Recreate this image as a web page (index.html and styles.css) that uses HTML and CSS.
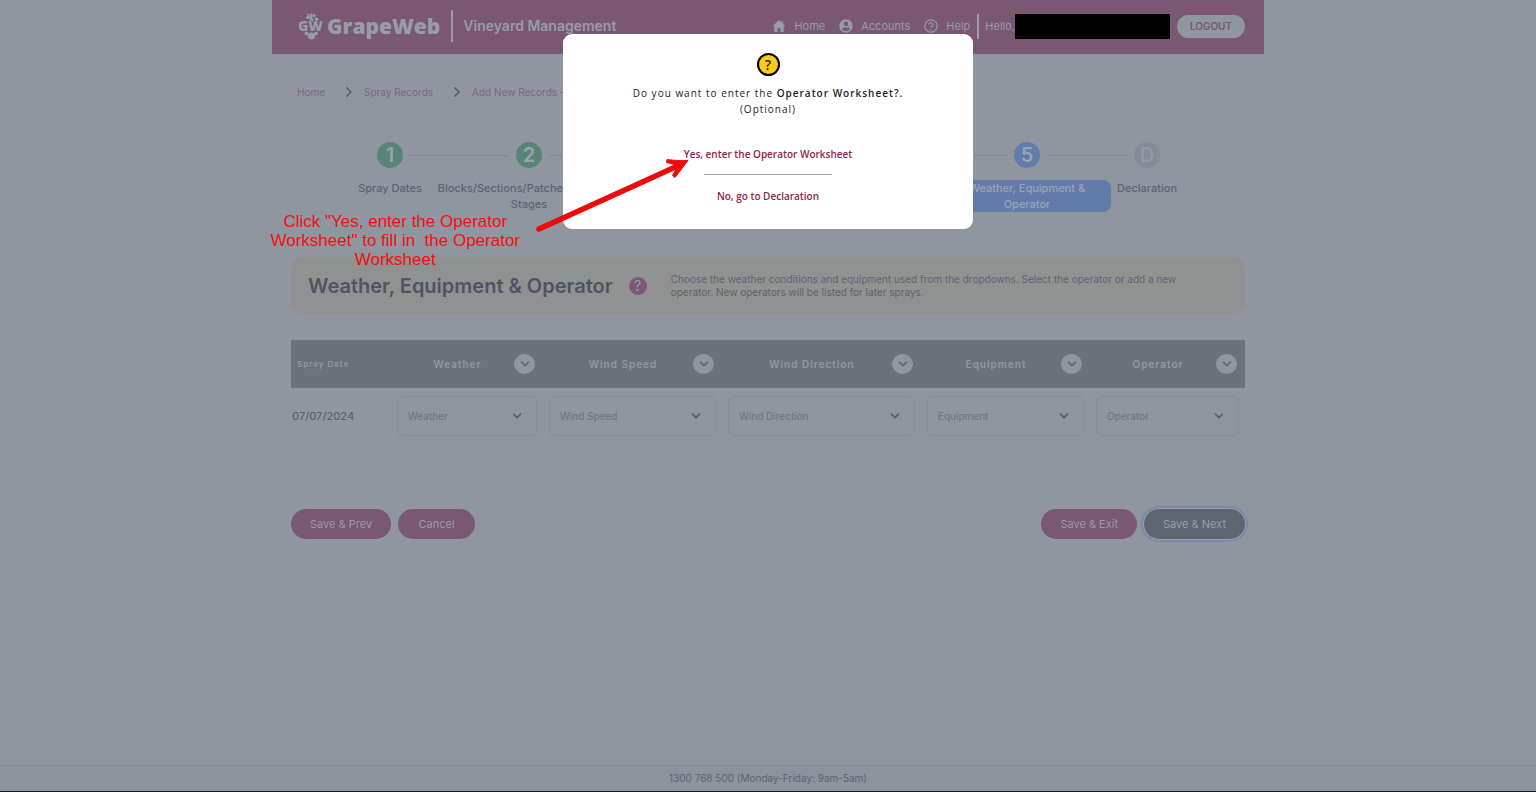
FILE: index.html
```html
<!DOCTYPE html>
<html lang="en">
<head>
    <meta charset="UTF-8">
    <meta name="viewport" content="width=device-width, initial-scale=1.0">
    <title>GrapeWeb - Vineyard Management</title>
    <link rel="stylesheet" href="styles.css">
</head>
<body>
    <!-- Shared icons -->
    <svg class="icon-defs" aria-hidden="true">
        <symbol id="chevron-down" viewBox="0 0 10 10">
            <path d="M1.5 3.2 5 6.7 8.5 3.2" fill="none" stroke="currentColor" stroke-width="1.8" stroke-linecap="round" stroke-linejoin="round"/>
        </symbol>
        <symbol id="chevron-right" viewBox="0 0 10 10">
            <path d="M3 1 7 5 3 9" fill="none" stroke="currentColor" stroke-width="1.7" stroke-linecap="round" stroke-linejoin="round"/>
        </symbol>
    </svg>

    <div class="page">
        <header class="header">
            <div class="brand">
                <svg class="brand-mark" viewBox="0 0 26 28" aria-hidden="true">
                    <path d="M12.5 7 10.5 3 9 2.200M12.500 7C14 5 13.500 3 12.500 1.500" fill="none" stroke="currentColor" stroke-width="1.500"/>
                    <circle cx="9.500" cy="5.500" r="1.600"/>
                    <circle cx="16" cy="3.800" r="1.700"/>
                    <circle cx="18.500" cy="7.500" r="1.900"/>
                    <circle cx="13.500" cy="8" r="2"/>
                    <circle cx="8.500" cy="21.500" r="2"/>
                    <circle cx="18" cy="21.500" r="1.900"/>
                    <circle cx="13.500" cy="24" r="3.500"/>
                    <text x="0" y="19" class="brand-mark-text">GW</text>
                </svg>
                <span class="brand-name">GrapeWeb</span>
                <span class="brand-title">Vineyard Management</span>
            </div>
            <nav class="nav">
                <a href="#home">
                    <svg viewBox="0 0 14 14" aria-hidden="true"><path d="M7 1 .5 7.200H2.300V13H5.500V9.200H8.500V13H11.700V7.200H13.500L11.300 5.100V2.200H9.600V3.500Z" fill="currentColor"/></svg>
                    Home
                </a>
                <a href="#accounts">
                    <svg viewBox="0 0 14 14" aria-hidden="true"><path fill-rule="evenodd" d="M7 .3a6.700 6.700 0 1 0 0 13.400A6.700 6.700 0 0 0 7 .3ZM7 2.600a2.300 2.300 0 1 1 0 4.600 2.300 2.300 0 0 1 0-4.600ZM2.900 9.900C3.500 8.800 5.200 8.400 7 8.400s3.500.4 4.100 1.500C10.200 11.300 8.700 12.100 7 12.100S3.800 11.300 2.900 9.900Z" fill="currentColor"/></svg>
                    Accounts
                </a>
                <a href="#help">
                    <svg viewBox="0 0 14 14" aria-hidden="true"><g fill="none" stroke="currentColor" stroke-width="1.200"><circle cx="7" cy="7" r="6.200"/><path d="M5 5.600C5 3.100 9 3.100 9 5.500 9 7 7 7 7 8.800M7 9.900V11"/></g></svg>
                    Help
                </a>
                <span class="user">Hello,<span class="user-name"></span></span>
                <button type="button" class="logout">LOGOUT</button>
            </nav>
        </header>

        <main class="content">
            <nav class="breadcrumb">
                <a href="#home">Home</a>
                <svg><use href="#chevron-right"/></svg>
                <a href="#records">Spray Records</a>
                <svg><use href="#chevron-right"/></svg>
                <a href="#new">Add New Records -</a>
            </nav>

            <ol class="steps">
                <li class="step done">
                    <div class="step-track"><span class="step-number">1</span></div>
                    <span class="step-label">Spray Dates</span>
                </li>
                <li class="step done">
                    <div class="step-track"><span class="step-number">2</span></div>
                    <span class="step-label">Blocks/Sections/Patches &amp; Growth Stages</span>
                </li>
                <li class="step done">
                    <div class="step-track"><span class="step-number"></span></div>
                </li>
                <li class="step done">
                    <div class="step-track"><span class="step-number"></span></div>
                </li>
                <li class="step current">
                    <div class="step-track"><span class="step-number">5</span></div>
                    <span class="step-label">Weather, Equipment &amp; Operator</span>
                </li>
                <li class="step">
                    <div class="step-track"><span class="step-number">D</span></div>
                    <span class="step-label">Declaration</span>
                </li>
            </ol>

            <section class="banner">
                <h1>Weather, Equipment &amp; Operator</h1>
                <button type="button" class="help-button" aria-label="Help">?</button>
                <p>Choose the weather conditions and equipment used from the dropdowns. Select the operator or add a new operator. New operators will be listed for later sprays.</p>
            </section>

            <table class="records">
                <colgroup>
                    <col class="col-date">
                    <col class="col-weather">
                    <col class="col-speed">
                    <col class="col-direction">
                    <col class="col-equipment">
                    <col class="col-operator">
                </colgroup>
                <thead>
                    <tr>
                        <th class="date-head">Spray Date</th>
                        <th><div class="head-cell"><span>Weather</span><button type="button" aria-label="Set all weather"><svg><use href="#chevron-down"/></svg></button></div></th>
                        <th><div class="head-cell"><span>Wind Speed</span><button type="button" aria-label="Set all wind speeds"><svg><use href="#chevron-down"/></svg></button></div></th>
                        <th><div class="head-cell"><span>Wind Direction</span><button type="button" aria-label="Set all wind directions"><svg><use href="#chevron-down"/></svg></button></div></th>
                        <th><div class="head-cell"><span>Equipment</span><button type="button" aria-label="Set all equipment"><svg><use href="#chevron-down"/></svg></button></div></th>
                        <th><div class="head-cell"><span>Operator</span><button type="button" aria-label="Set all operators"><svg><use href="#chevron-down"/></svg></button></div></th>
                    </tr>
                </thead>
                <tbody>
                    <tr>
                        <td class="date">07/07/2024</td>
                        <td><div class="select-box"><select aria-label="Weather"><option>Weather</option></select><svg><use href="#chevron-down"/></svg></div></td>
                        <td><div class="select-box"><select aria-label="Wind Speed"><option>Wind Speed</option></select><svg><use href="#chevron-down"/></svg></div></td>
                        <td><div class="select-box"><select aria-label="Wind Direction"><option>Wind Direction</option></select><svg><use href="#chevron-down"/></svg></div></td>
                        <td><div class="select-box"><select aria-label="Equipment"><option>Equipment</option></select><svg><use href="#chevron-down"/></svg></div></td>
                        <td><div class="select-box"><select aria-label="Operator"><option>Operator</option></select><svg><use href="#chevron-down"/></svg></div></td>
                    </tr>
                </tbody>
            </table>

            <div class="actions">
                <button type="button" class="btn">Save &amp; Prev</button>
                <button type="button" class="btn">Cancel</button>
                <button type="button" class="btn btn-right">Save &amp; Exit</button>
                <button type="button" class="btn btn-next">Save &amp; Next</button>
            </div>
        </main>

        <!-- Callout pointing at the first choice -->
        <p class="callout">Click "Yes, enter the Operator Worksheet" to fill in &nbsp;the Operator Worksheet</p>
        <svg class="callout-arrow" viewBox="0 0 156 80" aria-hidden="true">
            <path d="M3 74 146 9" fill="none" stroke="#ee0a0a" stroke-width="5.500" stroke-linecap="round"/>
            <path d="M152 5.500C144 6 136 5 131 4.500L130.500 7.500 142 10.500 136.500 20.500 139 22.500Z" fill="#ee0a0a" stroke="#ee0a0a" stroke-width="1" stroke-linejoin="round"/>
        </svg>
    </div>

    <footer class="footer">1300 768 500 (Monday-Friday: 9am-5am)</footer>

    <div class="overlay">
        <div class="modal" role="dialog" aria-modal="true" aria-labelledby="modal-text">
            <span class="modal-icon">?</span>
            <p id="modal-text">Do you want to enter the <strong>Operator Worksheet?.</strong><br>(Optional)</p>
            <button type="button">Yes, enter the Operator Worksheet</button>
            <hr>
            <button type="button">No, go to Declaration</button>
        </div>
    </div>
</body>
</html>
```
FILE: styles.css
```css
* {
    box-sizing: border-box;
}

body {
    margin: 0;
    min-height: 100vh;
    display: flex;
    flex-direction: column;
    background-color: #8f96a0;
    color: #5c6370;
    font-family: Inter, sans-serif;
    font-size: 11px;
    border-bottom: 1px solid #15181c;
}

button,
select {
    font-family: inherit;
}

button {
    border: none;
    padding: 0;
    cursor: pointer;
}

a {
    color: inherit;
    text-decoration: none;
}

.icon-defs {
    position: absolute;
    width: 0;
    height: 0;
}

.page {
    position: relative;
    flex: 1;
    width: 100%;
    max-width: 992px;
    margin: 0 auto;
}

/* Header */
.header {
    display: flex;
    justify-content: space-between;
    height: 54px;
    padding: 0 19px 0 26px;
    background-color: #7a5872;
    color: #979ca7;
}

.brand,
.nav,
.nav a,
.user {
    display: flex;
    align-items: center;
}

.brand {
    height: 52px;
}

.brand-mark {
    width: 26px;
    height: 28px;
    margin-right: 3px;
    fill: currentColor;
}

.brand-mark-text {
    font-family: "Open Sans", sans-serif;
    font-size: 14px;
    font-weight: 800;
    stroke: #7a5872;
    stroke-width: 1px;
    paint-order: stroke;
}

.brand-name {
    font-family: "Open Sans", sans-serif;
    font-size: 21px;
    font-weight: 800;
}

.brand-title {
    margin-left: 11px;
    padding-left: 10px;
    border-left: 2px solid #979ca7;
    font-size: 14px;
    font-weight: 600;
    line-height: 32px;
}

.nav {
    height: 52px;
}

.nav a {
    gap: 8px;
    margin-right: 14px;
}

.nav a svg {
    width: 14px;
    height: 14px;
}

.nav a:nth-of-type(3) {
    margin-right: 7px;
}

.user {
    height: 25px;
    padding-left: 6px;
    border-left: 2px solid #979ca7;
}

.user-name {
    width: 155px;
    height: 25px;
    background-color: #000;
}

.logout {
    width: 68px;
    height: 23px;
    margin-left: 7px;
    border-radius: 12px;
    background-color: #8f96a0;
    color: #7a5872;
    font-size: 10px;
    font-weight: 600;
}

.content {
    padding: 0 19px;
}

/* Breadcrumb */
.breadcrumb {
    display: flex;
    align-items: center;
    gap: 10px;
    padding: 30px 6px 0;
    color: #7a6780;
    font-size: 10px;
    line-height: 16px;
}

.breadcrumb svg {
    width: 10px;
    height: 10px;
    margin-left: 9px;
    color: #565e69;
}

/* Progress steps */
.steps {
    display: grid;
    grid-template-columns: 82fr 196fr 158fr 158fr 168fr 72fr;
    margin: 42px 0 0;
    padding: 0 62px 0 58px;
    list-style: none;
}

.step-track {
    display: flex;
    align-items: center;
    gap: 7px;
}

.step-track::before,
.step-track::after {
    content: "";
    flex: 1;
    height: 1px;
    background-color: #838a95;
}

.step:first-child .step-track::before,
.step:last-child .step-track::after {
    background-color: transparent;
}

.step-number {
    width: 26px;
    height: 26px;
    border-radius: 50%;
    background-color: #868c98;
    color: #9499a5;
    font-size: 20px;
    font-weight: 600;
    line-height: 26px;
    text-align: center;
}

.step-label {
    display: block;
    margin-top: 12px;
    border-radius: 8px;
    font-weight: 500;
    line-height: 16px;
    text-align: center;
}

.done .step-number {
    background-color: #598577;
}

.current .step-number,
.current .step-label {
    background-color: #627bab;
    color: #9aa3b3;
}

.done .step-number {
    color: #9aa3aa;
}

.current .step-label {
    padding: 0 20px;
}

/* Page title banner */
.banner {
    display: flex;
    align-items: center;
    min-height: 57px;
    margin-top: 45px;
    padding: 0 50px 0 17px;
    border-radius: 12px;
    background-color: #909291;
}

.banner h1 {
    margin: 0;
    color: #4d5564;
    font-size: 20px;
    font-weight: 600;
    white-space: nowrap;
}

.help-button {
    flex: none;
    width: 18px;
    height: 18px;
    margin: 0 24px 0 16px;
    border-radius: 50%;
    background-color: #7d5778;
    color: #979ca7;
    font-size: 14px;
    line-height: 18px;
}

.banner p {
    margin: 0;
    font-size: 10px;
    line-height: 13px;
}

/* Spray records table */
.records {
    width: 100%;
    margin-top: 26px;
    border-collapse: collapse;
    table-layout: fixed;
}

.col-date {
    width: 100px;
}

.col-weather {
    width: 152px;
}

.col-speed {
    width: 179px;
}

.col-direction {
    width: 199px;
}

.col-equipment {
    width: 169px;
}

.col-operator {
    width: 155px;
}

.records th {
    height: 48px;
    padding: 0;
    background-color: #6b727c;
    color: #9298a2;
    font-size: 10px;
    font-weight: 600;
    letter-spacing: 1px;
}

.records .date-head {
    padding-left: 6px;
    font-size: 8px;
    text-align: left;
}

.head-cell {
    display: flex;
    align-items: center;
    padding: 0 8px 0 10px;
}

.head-cell span {
    flex: 1;
}

.head-cell button {
    display: flex;
    align-items: center;
    justify-content: center;
    width: 21px;
    height: 20px;
    border-radius: 50%;
    background-color: #8f96a0;
    color: #626974;
}

.head-cell svg,
.select-box svg {
    width: 10px;
    height: 10px;
}

.records td {
    padding: 8px 6px 0;
}

.records .date {
    padding-left: 1px;
    color: #5a616d;
    font-weight: 500;
}

.select-box {
    position: relative;
}

.select-box select {
    display: block;
    width: 100%;
    height: 40px;
    padding: 0 10px;
    appearance: none;
    border: 1px solid #878e9b;
    border-radius: 5px;
    background-color: transparent;
    color: #6d7481;
    font-size: 10px;
}

.select-box svg {
    position: absolute;
    top: 15px;
    right: 15px;
    color: #5c636f;
    pointer-events: none;
}

/* Buttons under the table */
.actions {
    display: flex;
    gap: 7px;
    margin-top: 73px;
}

.btn {
    min-width: 77px;
    height: 30px;
    padding: 0 19px;
    border-radius: 15px;
    background-color: #7a5872;
    color: #989ea9;
    font-size: 11px;
}

.btn-right {
    margin-left: auto;
}

.btn-next {
    background-color: #5e6672;
    box-shadow: 0 0 0 1px #959ca6, 0 0 0 3px #7b8aa8;
}

/* Footer */
.footer {
    border-top: 1px solid #868d97;
    background-color: #8c939d;
    font-size: 10px;
    line-height: 25px;
    text-align: center;
}

/* Modal */
.overlay {
    position: fixed;
    inset: 0;
    z-index: 10;
    display: flex;
    align-items: flex-start;
    justify-content: center;
    padding-top: 34px;
}

.modal {
    display: flex;
    flex-direction: column;
    align-items: center;
    width: 410px;
    max-width: 100%;
    padding: 19px 20px 24px;
    border-radius: 9px;
    background-color: #fff;
    color: #222;
    font-family: "Open Sans", sans-serif;
}

.modal-icon {
    width: 23px;
    height: 23px;
    border: 2px solid #000;
    border-radius: 50%;
    background-color: #facc15;
    font-size: 14px;
    font-weight: 600;
    line-height: 19px;
    text-align: center;
}

.modal p {
    margin: 9px 0 28px;
    font-size: 10px;
    letter-spacing: 1px;
    line-height: 16px;
    text-align: center;
}

.modal strong {
    font-weight: 600;
}

.modal button {
    background-color: transparent;
    color: #8f1d4f;
    font-size: 10px;
    font-weight: 600;
    line-height: 18px;
}

.modal hr {
    width: 128px;
    margin: 11px 0 12px;
    border: none;
    border-top: 1px solid #a3a9b5;
}

/* Callout */
.callout {
    position: absolute;
    top: 212px;
    left: -5px;
    z-index: 20;
    width: 256px;
    margin: 0;
    color: #ff0a0a;
    font-family: "Liberation Sans", Arial, sans-serif;
    font-size: 17px;
    line-height: 19px;
    text-align: center;
}

.callout-arrow {
    position: absolute;
    top: 155px;
    left: 264px;
    z-index: 20;
    width: 156px;
    height: 80px;
}
```
